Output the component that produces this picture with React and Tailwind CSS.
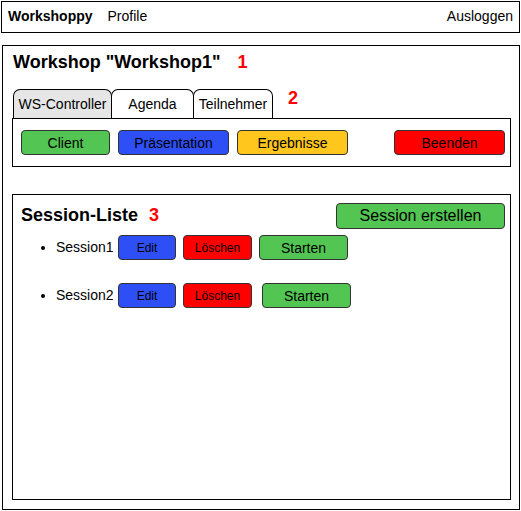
import React from 'react';

const font = { fontFamily: '"Liberation Sans", Arial, sans-serif' };

function Btn({ color, className = '', children }) {
    return (
        <button className={`${color} border border-[#333] rounded-[4px] text-black flex items-center justify-center leading-none ${className}`}>
            {children}
        </button>
    );
}

function SessionRow({ name, startMl }) {
    return (
        <li className="flex items-center h-[25px]">
            <span className="w-[4px] h-[4px] rounded-full bg-black ml-[28px] mr-[11px]"></span>
            <span className="text-[14px] w-[62px]">{name}</span>
            <Btn color="bg-[#2e4ff5]" className="w-[58px] h-[25px] text-[12px]">Edit</Btn>
            <Btn color="bg-[#ff0000]" className="w-[69px] h-[25px] text-[12px] ml-[7px]">Löschen</Btn>
            <Btn color="bg-[#52c552]" className={`w-[89px] h-[25px] text-[14px] ${startMl}`}>Starten</Btn>
        </li>
    );
}

export default function App() {
    const tabs = [
        { label: 'WS-Controller', w: 'w-[99px]', active: true },
        { label: 'Agenda', w: 'w-[83px]' },
        { label: 'Teilnehmer', w: 'w-[80px]' },
    ];

    return (
        <div className="w-[521px] h-[511px] bg-white text-black overflow-hidden" style={font}>
            {/* top nav */}
            <div className="mt-[1px] ml-[1px] w-[519px] h-[32px] border border-black flex items-center px-[6px] text-[14px] pb-[1px]">
                <span className="font-bold">Workshoppy</span>
                <span className="ml-[15px]">Profile</span>
                <span className="ml-auto">Ausloggen</span>
            </div>

            {/* main panel */}
            <div className="mt-[12px] ml-[2px] w-[518px] h-[465px] border border-black flex flex-col">
                <div className="flex items-center h-[20px] mt-[6px] pl-[10px]">
                    <h1 className="text-[18px] font-bold">Workshop "Workshop1"</h1>
                    <span className="ml-[17px] text-[18px] font-bold text-[#ff0000]">1</span>
                </div>

                {/* tabs */}
                <div className="mt-[17px] ml-[10px] flex items-end h-[29px]">
                    {tabs.map((t, i) => (
                        <div
                            key={t.label}
                            className={`${t.w} h-[29px] border border-black border-b-0 rounded-t-[7px] flex items-center justify-center text-[14px] ${i > 0 ? '-ml-[1px]' : ''} ${t.active ? 'bg-[#e6e6e6]' : 'bg-white'}`}
                        >
                            {t.label}
                        </div>
                    ))}
                    <span className="ml-[15px] mb-[6px] text-[18px] font-bold text-[#ff0000]">2</span>
                </div>
                <div className="ml-[9px] w-[499px] h-[49px] border border-black flex items-center pl-[8px] pr-[5px]">
                    <Btn color="bg-[#52c552]" className="w-[89px] h-[25px] text-[14px]">Client</Btn>
                    <Btn color="bg-[#2e4ff5]" className="w-[111px] h-[25px] text-[14px] ml-[8px]">Präsentation</Btn>
                    <Btn color="bg-[#ffc61e]" className="w-[111px] h-[25px] text-[14px] ml-[8px]">Ergebnisse</Btn>
                    <Btn color="bg-[#ff0000]" className="w-[111px] h-[25px] text-[14px] ml-auto">Beenden</Btn>
                </div>

                {/* session list */}
                <div className="mt-[27px] ml-[9px] w-[499px] h-[306px] border border-black">
                    <div className="flex items-center mt-[7px] pl-[8px] pr-[5px]">
                        <h2 className="text-[18px] font-bold">Session-Liste</h2>
                        <span className="ml-[11px] text-[18px] font-bold text-[#ff0000]">3</span>
                        <Btn color="bg-[#52c552]" className="w-[169px] h-[26px] text-[16px] ml-auto">Session erstellen</Btn>
                    </div>
                    <ul className="mt-[6px] flex flex-col gap-[23px]">
                        <SessionRow name="Session1" startMl="ml-[7px]" />
                        <SessionRow name="Session2" startMl="ml-[10px]" />
                    </ul>
                </div>
            </div>
        </div>
    );
}
